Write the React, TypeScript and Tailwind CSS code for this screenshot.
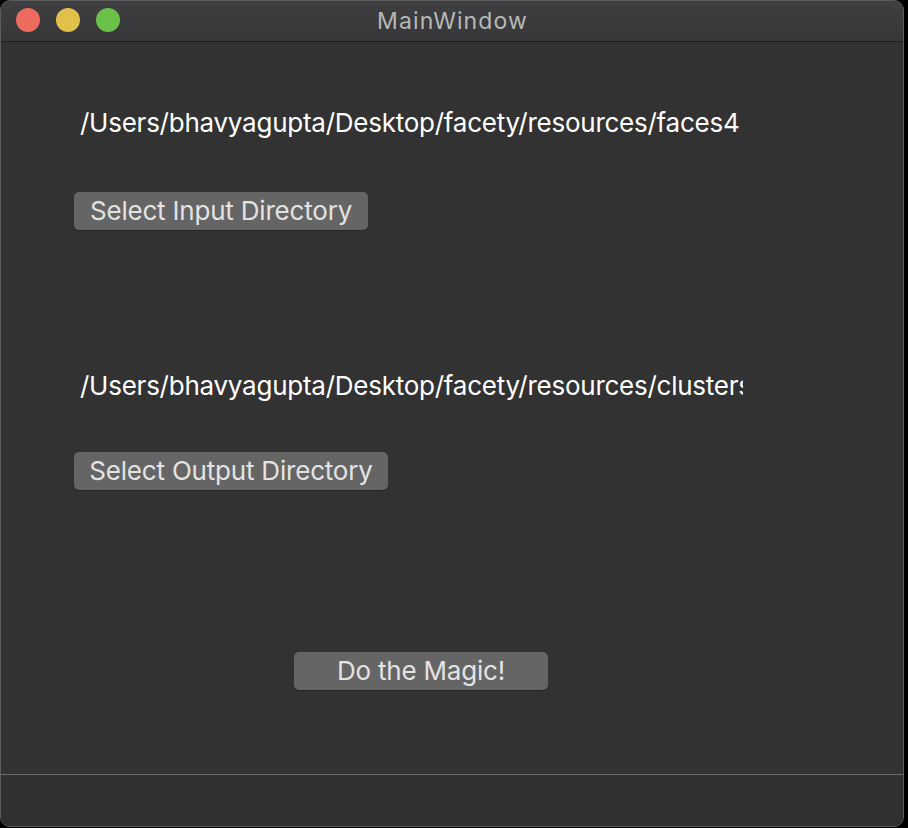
const paths = {
  input: "/Users/bhavyagupta/Desktop/facety/resources/faces4",
  output: "/Users/bhavyagupta/Desktop/facety/resources/clusters",
};

const Button = ({ label, width }: { label: string; width: string }) => (
  <button
    className={`h-[38px] ${width} rounded-[5px] bg-[#656565] text-[26px] leading-none tracking-[-0.2px] text-[#e3e3e3] shadow-[0_1px_0_rgba(0,0,0,0.25)]`}
  >
    {label}
  </button>
);

const App = () => {
  return (
    <div className="h-[828px] w-[908px] bg-black" style={{ fontFamily: 'Inter, "Liberation Sans", Arial, sans-serif' }}>
      <div className="flex h-[827px] w-[904px] flex-col overflow-hidden rounded-[10px] border border-[#5c5c5c] bg-[#323232]">
        {/* barra de título */}
        <div className="relative flex h-[41px] shrink-0 items-center justify-center border-b border-[#1c1c1c] bg-gradient-to-b from-[#3f3f41] to-[#373739]">
          <div className="absolute left-[15px] top-[7px] flex gap-[16px]">
            <span className="h-[24px] w-[24px] rounded-full bg-[#ec6a5e]" />
            <span className="h-[24px] w-[24px] rounded-full bg-[#e1c04c]" />
            <span className="h-[24px] w-[24px] rounded-full bg-[#6bc04a]" />
          </div>
          <span className="pl-[1px] text-[23px] tracking-[1.1px] text-[#b8b8b8]">MainWindow</span>
        </div>

        {/* conteúdo */}
        <div className="flex flex-1 flex-col pl-[73px]">
          <div className="mt-[66px] w-[669px] overflow-hidden whitespace-nowrap pl-[6px] text-[26px] leading-[30px] tracking-[-0.25px] text-white">
            {paths.input}
          </div>
          <div className="mt-[54px]">
            <Button label="Select Input Directory" width="w-[294px]" />
          </div>

          <div className="mt-[141px] w-[669px] overflow-hidden whitespace-nowrap pl-[6px] text-[26px] leading-[30px] tracking-[-0.25px] text-white">
            {paths.output}
          </div>
          <div className="mt-[51px]">
            <Button label="Select Output Directory" width="w-[314px]" />
          </div>

          <div className="mt-[162px] pl-[220px]">
            <Button label="Do the Magic!" width="w-[254px]" />
          </div>
        </div>

        {/* barra de status */}
        <div className="h-[52px] shrink-0 border-t border-[#6b6b6b] bg-[#303030]" />
      </div>
    </div>
  );
};

export default App;
